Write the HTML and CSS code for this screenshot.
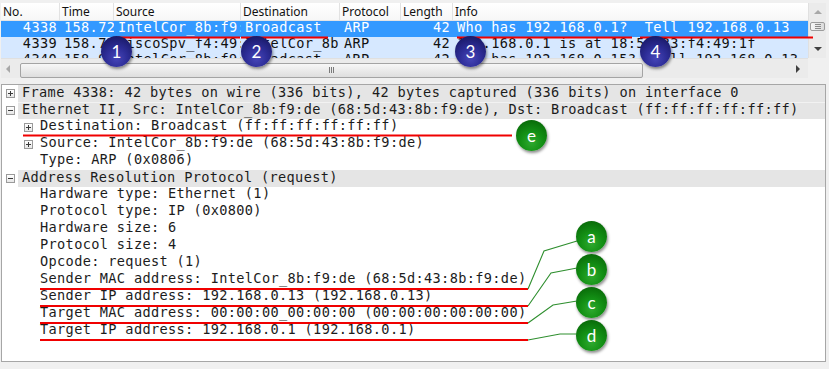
FILE: index.html
```html
<!DOCTYPE html>
<html lang="en">
<head>
    <meta charset="UTF-8">
    <title>ARP request - packet details</title>
    <link rel="stylesheet" href="styles.css">
</head>
<body>
    <div class="app">
        <div class="packet-pane">
            <div class="list-area">
                <div class="list">
                    <div class="cols list-head">
                        <div>No.</div>
                        <div>Time</div>
                        <div>Source</div>
                        <div>Destination</div>
                        <div>Protocol</div>
                        <div>Length</div>
                        <div>Info</div>
                    </div>
                    <div class="list-body">
                        <div class="cols pkt selected">
                            <div class="num">4338</div>
                            <div>158.722614000</div>
                            <div>IntelCor_8b:f9:de</div>
                            <div>Broadcast</div>
                            <div>ARP</div>
                            <div class="num">42</div>
                            <div>Who has 192.168.0.1?  Tell 192.168.0.13</div>
                        </div>
                        <div class="cols pkt arp">
                            <div class="num">4339</div>
                            <div>158.724310000</div>
                            <div>CiscoSpv_f4:49:1f</div>
                            <div>IntelCor_8b:f9:de</div>
                            <div>ARP</div>
                            <div class="num">42</div>
                            <div>192.168.0.1 is at 18:59:33:f4:49:1f</div>
                        </div>
                        <div class="cols pkt arp">
                            <div class="num">4340</div>
                            <div>158.912087000</div>
                            <div>IntelCor_8b:f9:de</div>
                            <div>Broadcast</div>
                            <div>ARP</div>
                            <div class="num">42</div>
                            <div>Who has 192.168.0.15?  Tell 192.168.0.13</div>
                        </div>
                    </div>
                </div>
                <div class="vscroll">
                    <span class="arrow up"></span>
                    <span class="vthumb"><i></i><i></i><i></i></span>
                    <span class="arrow down"></span>
                </div>
            </div>
            <div class="hscroll-row">
                <div class="hscroll">
                    <span class="arrow left"></span>
                    <div class="htrack">
                        <span class="hthumb"><i></i><i></i><i></i></span>
                    </div>
                    <span class="arrow right"></span>
                </div>
                <div class="corner"></div>
            </div>
        </div>

        <div class="splitter"></div>

        <div class="details">
            <div class="node top"><span class="tw plus"></span><span class="label">Frame 4338: 42 bytes on wire (336 bits), 42 bytes captured (336 bits) on interface 0</span></div>
            <div class="node top"><span class="tw"></span><span class="label">Ethernet II, Src: IntelCor_8b:f9:de (68:5d:43:8b:f9:de), Dst: Broadcast (ff:ff:ff:ff:ff:ff)</span></div>
            <div class="node child"><span class="tw plus"></span><span class="label">Destination: Broadcast (ff:ff:ff:ff:ff:ff)</span></div>
            <div class="node child"><span class="tw plus"></span><span class="label">Source: IntelCor_8b:f9:de (68:5d:43:8b:f9:de)</span></div>
            <div class="node child"><span class="tw leaf"></span><span class="label">Type: ARP (0x0806)</span></div>
            <div class="node top"><span class="tw"></span><span class="label">Address Resolution Protocol (request)</span></div>
            <div class="node child"><span class="tw leaf"></span><span class="label">Hardware type: Ethernet (1)</span></div>
            <div class="node child"><span class="tw leaf"></span><span class="label">Protocol type: IP (0x0800)</span></div>
            <div class="node child"><span class="tw leaf"></span><span class="label">Hardware size: 6</span></div>
            <div class="node child"><span class="tw leaf"></span><span class="label">Protocol size: 4</span></div>
            <div class="node child"><span class="tw leaf"></span><span class="label">Opcode: request (1)</span></div>
            <div class="node child"><span class="tw leaf"></span><span class="label">Sender MAC address: IntelCor_8b:f9:de (68:5d:43:8b:f9:de)</span></div>
            <div class="node child"><span class="tw leaf"></span><span class="label">Sender IP address: 192.168.0.13 (192.168.0.13)</span></div>
            <div class="node child"><span class="tw leaf"></span><span class="label">Target MAC address: 00:00:00_00:00:00 (00:00:00:00:00:00)</span></div>
            <div class="node child"><span class="tw leaf"></span><span class="label">Target IP address: 192.168.0.1 (192.168.0.1)</span></div>
        </div>
    </div>

    <!-- annotation layer: underlines, leader lines and callout badges -->
    <div class="annotations">
        <svg width="829" height="369" viewBox="0 0 829 369">
            <g class="underline">
                <path d="M118 37.5 H240"/>
                <path d="M241 37.5 H328"/>
                <path d="M457 37.5 H632"/>
                <path d="M640 37.5 H813"/>
                <path d="M23 135.5 H512"/>
                <path d="M40 289 H528"/>
                <path d="M40 306 H528"/>
                <path d="M40 323 H528"/>
                <path d="M40 340 H528"/>
            </g>
            <g class="leader">
                <path d="M528 289 L544 251 L577 241"/>
                <path d="M528 306 L551 273 L577 268"/>
                <path d="M528 323 L553 305 L577 301"/>
                <path d="M528 340 L560 334 L578 334"/>
            </g>
        </svg>
        <span class="badge blue b1">1</span>
        <span class="badge blue b2">2</span>
        <span class="badge blue b3">3</span>
        <span class="badge blue b4">4</span>
        <span class="badge green be">e</span>
        <span class="badge green ba">a</span>
        <span class="badge green bb">b</span>
        <span class="badge green bc">c</span>
        <span class="badge green bd">d</span>
    </div>
</body>
</html>
```

FILE: styles.css
```css
body {
    margin: 0;
    width: 829px;
    height: 369px;
    overflow: hidden;
    position: relative;
    background-color: #f0f0f0;
    font-family: "DejaVu Sans Mono", monospace;
    color: #1c1c1c;
}
.app {
    padding: 3px 3px 0 1px;
}

/* packet list */
.packet-pane {
    background: #fff;
}
.list-area {
    display: flex;
    height: 55px;
}
.list {
    width: 807px;
    overflow: hidden;
}
.cols {
    display: grid;
    grid-template-columns: 59px 54px 127px 99px 61px 52px 1fr;
}
.cols > div {
    overflow: hidden;
    white-space: pre;
}
.list-head {
    height: 17px;
    line-height: 17px;
    border-bottom: 1px solid #e4e4e4;
    background: linear-gradient(#ffffff, #f7f7f7);
    font-family: "Noto Sans", sans-serif;
    font-size: 12px;
    color: #111;
}
.list-head > div {
    padding-left: 2px;
    border-right: 1px solid #e2e2e2;
}
.list-head > div:last-child {
    border-right: none;
}
.list-body {
    height: 37px;
    overflow: hidden;
}
.pkt {
    height: 16px;
    font-size: 13.6px;
    letter-spacing: 0.35px;
}
.pkt > div {
    height: 16px;
    line-height: 12px;
    padding-left: 4px;
}
.pkt > .num {
    text-align: right;
    padding-left: 0;
    padding-right: 3px;
}
.pkt.selected {
    background-color: #3399ff;
    color: #fff;
}
.pkt.arp {
    background-color: #d6e8ff;
    color: #111;
}

/* scrollbars */
.vscroll {
    width: 18px;
    background: #ebebeb;
    border-left: 1px solid #e0e0e0;
    box-sizing: border-box;
    display: flex;
    flex-direction: column;
    align-items: center;
}
.arrow {
    width: 0;
    height: 0;
    border: 4px solid transparent;
}
.arrow.up {
    margin-top: 7px;
    border-bottom-color: #a8a8a8;
    border-top-width: 0;
}
.arrow.down {
    margin-top: auto;
    margin-bottom: 7px;
    border-top-color: #404040;
    border-bottom-width: 0;
}
.arrow.left {
    margin-left: 5px;
    border-right-color: #a8a8a8;
    border-left-width: 0;
}
.arrow.right {
    margin-right: 8px;
    border-left-color: #404040;
    border-right-width: 0;
}
.vthumb {
    margin-top: 8px;
    width: 15px;
    height: 9px;
    box-sizing: border-box;
    border: 1px solid #9c9c9c;
    border-radius: 2px;
    background: linear-gradient(90deg, #f6f6f6, #dcdcdc);
    display: flex;
    flex-direction: column;
    align-items: center;
    justify-content: center;
    gap: 1px;
}
.vthumb i {
    width: 6px;
    height: 1px;
    background: #8a8a8a;
}
.hscroll-row {
    display: flex;
    height: 20px;
}
.hscroll {
    width: 807px;
    display: flex;
    align-items: center;
    background: #ebebeb;
    border-top: 1px solid #e0e0e0;
}
.htrack {
    flex: 1;
    height: 16px;
    margin: 0 0 0 10px;
}
.hthumb {
    width: 623px;
    height: 15px;
    box-sizing: border-box;
    margin-top: 2px;
    border: 1px solid #a4a4a4;
    border-radius: 2px;
    background: linear-gradient(#f7f7f7, #dedede);
    display: flex;
    align-items: center;
    justify-content: center;
    gap: 1px;
}
.hthumb i {
    width: 1px;
    height: 6px;
    background: #7a7a7a;
}
.corner {
    width: 18px;
    background: #f0f0f0;
}
.splitter {
    height: 6px;
    background: #f0f0f0;
}

/* packet details tree */
.details {
    height: 276px;
    background: #fff;
    border: 1px solid #a6a6a6;
    overflow: hidden;
    font-size: 13.6px;
    letter-spacing: 0.35px;
}
.node {
    display: flex;
    align-items: center;
    height: 17px;
    white-space: pre;
}
.node.top {
    padding-left: 4px;
}
.node.child {
    padding-left: 22px;
}
.label {
    flex: 1;
    align-self: stretch;
    padding-left: 4px;
    line-height: 13px;
}
.node.top .label {
    background-color: #e5e5e5;
    line-height: 14px;
}
.node.top + .node.top .label {
    border-top: 1px solid #f2f2f2;
    line-height: 13px;
}
.tw {
    position: relative;
    width: 9px;
    height: 9px;
    box-sizing: border-box;
    margin-right: 3px;
    border: 1px solid #9a9a9a;
    background: linear-gradient(#ffffff, #e6e6e6);
}
.tw::before {
    content: "";
    position: absolute;
    left: 1px;
    top: 3px;
    width: 5px;
    height: 1px;
    background: #3a3a3a;
}
.tw.plus::after {
    content: "";
    position: absolute;
    left: 3px;
    top: 1px;
    width: 1px;
    height: 5px;
    background: #3a3a3a;
}
.tw.leaf {
    visibility: hidden;
}

/* annotations */
.annotations {
    position: absolute;
    left: 0;
    top: 0;
    width: 829px;
    height: 369px;
    pointer-events: none;
}
.annotations svg {
    position: absolute;
    left: 0;
    top: 0;
}
.underline path {
    stroke: #f00000;
    stroke-width: 2;
    fill: none;
}
.leader path {
    stroke: #2f8f2f;
    stroke-width: 1.1;
    fill: none;
}
.badge {
    position: absolute;
    width: 31px;
    height: 31px;
    border-radius: 50%;
    display: flex;
    align-items: center;
    justify-content: center;
    color: #fff;
    font-family: Lato, "Open Sans", sans-serif;
    font-size: 17px;
    box-shadow: 1px 2px 3px rgba(0,0,0,0.45);
}
.badge.blue {
    background: radial-gradient(circle at 50% 72%, #4646b8 0%, #2d2d97 40%, #1d1d70 75%, #14145a 100%);
}
.badge.green {
    background: radial-gradient(circle at 50% 72%, #2faa2f 0%, #139015 40%, #0b720b 75%, #075607 100%);
}
.b1 { left: 101px; top: 36px; }
.b2 { left: 241px; top: 36px; }
.b3 { left: 455px; top: 36px; }
.b4 { left: 640px; top: 36px; }
.be { left: 516px; top: 120px; }
.ba { left: 576px; top: 221px; }
.bb { left: 576px; top: 254px; }
.bc { left: 576px; top: 287px; }
.bd { left: 576px; top: 320px; }
```
